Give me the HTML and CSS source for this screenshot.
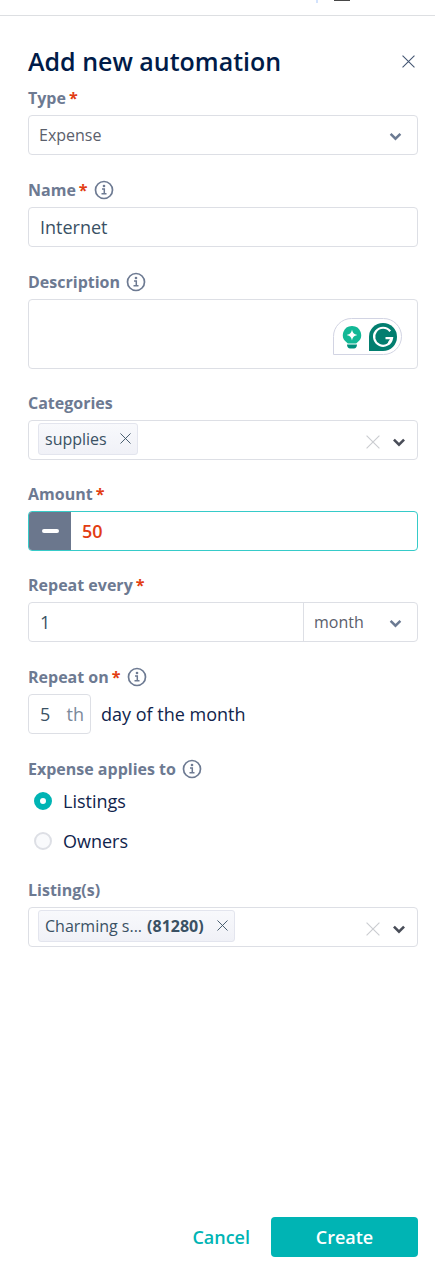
FILE: index.html
```
<!DOCTYPE html>
<html lang="en">
<head>
    <meta charset="UTF-8">
    <meta name="viewport" content="width=device-width, initial-scale=1.0">
    <title>Add new automation</title>
    <link rel="stylesheet" href="styles.css">
</head>
<body>
    <svg class="symbols" aria-hidden="true">
        <symbol id="info" viewBox="0 0 20 20">
            <circle cx="10" cy="10" r="8.5" fill="none" stroke="currentColor" stroke-width="1.7"/>
            <circle cx="10" cy="6" r="1.3" fill="currentColor"/>
            <path d="M8 9h2.3v4.6M7.5 13.8h5" fill="none" stroke="currentColor" stroke-width="1.5"/>
        </symbol>
        <symbol id="cross" viewBox="0 0 12 12">
            <path d="M.5.5l11 11M11.5.5l-11 11" fill="none" stroke="currentColor"/>
        </symbol>
        <symbol id="chevron" viewBox="0 0 12 8">
            <path d="M1.5 1.5L6 6l4.5-4.5" fill="none" stroke="currentColor" stroke-width="2.3"/>
        </symbol>
    </svg>

    <div class="topbar">
        <span class="topbar-divider"></span>
        <span class="topbar-menu"></span>
    </div>

    <form class="panel">
        <header class="panel-header">
            <h1>Add new automation</h1>
            <button type="button" class="close" aria-label="Close"><svg><use href="#cross"/></svg></button>
        </header>

        <div class="field">
            <div class="label"><label for="type">Type</label><span class="required">*</span></div>
            <div class="box">
                <select id="type"><option>Expense</option></select>
                <svg class="chevron"><use href="#chevron"/></svg>
            </div>
        </div>

        <div class="field">
            <div class="label"><label for="name">Name</label><span class="required">*</span><svg class="info"><use href="#info"/></svg></div>
            <div class="box"><input type="text" id="name" value="Internet"></div>
        </div>

        <div class="field">
            <div class="label"><label for="description">Description</label><svg class="info"><use href="#info"/></svg></div>
            <div class="box box-area">
                <textarea id="description"></textarea>
                <div class="assistant">
                    <svg class="bulb" viewBox="0 0 20 24">
                        <path d="M10 1a9 9 0 0 0-5.5 16.2c.8.6 1 .8 1.3 1.3h8.4c.3-.5.5-.7 1.3-1.3A9 9 0 0 0 10 1z" fill="#12b896"/>
                        <path d="M10 4.5c.8 3.600 1.800 4.500 5.200 5.500-3.400 1-4.400 1.900-5.200 5.500-.8-3.600-1.800-4.500-5.200-5.500 3.400-1 4.400-1.900 5.200-5.500z" fill="#fff"/>
                        <path d="M5 19.5h10c0 2.500-1.500 4-3 4H8c-1.500 0-3-1.500-3-4z" fill="#00907c"/>
                    </svg>
                    <svg class="grammar" viewBox="0 0 28 28">
                        <path d="M14 0a14 14 0 1 1 0 28H0V14A14 14 0 0 1 14 0z" fill="#027e6f"/>
                        <path d="M21.2 8.200A9 9 0 1 0 23 15.200h-6.500M19.800 19.800l3.200-4.600" fill="none" stroke="#fff" stroke-width="2.2"/>
                    </svg>
                </div>
            </div>
        </div>

        <div class="field">
            <div class="label"><label for="categories">Categories</label></div>
            <div class="box">
                <span class="tag">supplies <button type="button" aria-label="Remove supplies"><svg><use href="#cross"/></svg></button></span>
                <input type="text" id="categories">
                <button type="button" class="clear" aria-label="Clear categories"><svg><use href="#cross"/></svg></button>
                <button type="button" class="toggle" aria-label="Open categories"><svg><use href="#chevron"/></svg></button>
            </div>
        </div>

        <div class="field">
            <div class="label"><label for="amount">Amount</label><span class="required">*</span></div>
            <div class="box box-active">
                <button type="button" class="sign" aria-label="Negative amount"><span></span></button>
                <input type="text" id="amount" class="amount" value="50">
            </div>
        </div>

        <div class="field">
            <div class="label"><label for="every">Repeat every</label><span class="required">*</span></div>
            <div class="box">
                <input type="text" id="every" value="1">
                <div class="unit">
                    <select aria-label="Repeat unit"><option>month</option></select>
                    <svg class="chevron"><use href="#chevron"/></svg>
                </div>
            </div>
        </div>

        <div class="field">
            <div class="label"><label for="day">Repeat on</label><span class="required">*</span><svg class="info"><use href="#info"/></svg></div>
            <div class="day-row">
                <div class="box box-day">
                    <input type="text" id="day" value="5">
                    <span>th</span>
                </div>
                <span>day of the month</span>
            </div>
        </div>

        <fieldset class="field">
            <legend class="label">Expense applies to<svg class="info"><use href="#info"/></svg></legend>
            <div class="radios">
                <label><input type="radio" name="applies" checked>Listings</label>
                <label><input type="radio" name="applies">Owners</label>
            </div>
        </fieldset>

        <div class="field">
            <div class="label"><label for="listings">Listing(s)</label></div>
            <div class="box">
                <span class="tag">Charming s... <b>(81280)</b> <button type="button" aria-label="Remove listing"><svg><use href="#cross"/></svg></button></span>
                <input type="text" id="listings">
                <button type="button" class="clear" aria-label="Clear listings"><svg><use href="#cross"/></svg></button>
                <button type="button" class="toggle" aria-label="Open listings"><svg><use href="#chevron"/></svg></button>
            </div>
        </div>

        <footer class="actions">
            <button type="button" class="cancel">Cancel</button>
            <button type="submit" class="create">Create</button>
        </footer>
    </form>
</body>
</html>
```
FILE: styles.css
```
* {
    box-sizing: border-box;
}

body {
    display: flex;
    flex-direction: column;
    min-height: 100vh;
    margin: 0;
    font-family: "Open Sans", sans-serif;
    font-size: 16px;
    line-height: 24px;
    color: #10244c;
    background-color: #fff;
}

button,
input,
select,
textarea {
    margin: 0;
    padding: 0;
    border: none;
    outline: none;
    background: none;
    font: inherit;
    color: inherit;
}

button {
    cursor: pointer;
}

svg {
    display: block;
    flex: none;
}

.symbols {
    position: absolute;
    width: 0;
    height: 0;
}

.topbar {
    display: flex;
    justify-content: flex-end;
    gap: 16px;
    height: 16px;
    padding-right: 85px;
    border-bottom: 1px solid #dddfe2;
}

.topbar-divider {
    width: 2px;
    height: 3px;
    background-color: #d3e3fd;
}

.topbar-menu {
    width: 16px;
    height: 1px;
    background-color: #474747;
}

.panel {
    display: flex;
    flex-direction: column;
    flex: 1;
    padding: 27px 17px 19px 28px;
}

.panel-header {
    display: flex;
    justify-content: space-between;
    align-items: center;
    height: 36px;
    margin-bottom: 8px;
}

.panel-header h1 {
    margin: 0;
    font-size: 25px;
    font-weight: 600;
    line-height: 36px;
    color: #001b48;
}

.close {
    padding: 3px;
    color: #435572;
}

.close svg {
    width: 13px;
    height: 13px;
}

.field {
    min-width: 0;
    margin: 0 0 23px;
    padding: 0;
    border: none;
}

.label {
    display: flex;
    align-items: center;
    padding: 0;
    margin-bottom: 5px;
    font-weight: 700;
    line-height: 23px;
    color: #6d7a92;
}

.required {
    margin-left: 3px;
    color: #e23c12;
}

.info {
    width: 20px;
    height: 24px;
    margin-left: 6px;
}

.box {
    display: flex;
    align-items: center;
    position: relative;
    height: 40px;
    border: 1px solid #dddfe5;
    border-radius: 4px;
    font-size: 18px;
    color: #3a5164;
}

.box input {
    flex: 1;
    min-width: 0;
    height: 100%;
    padding-left: 11px;
}

.box select {
    width: 100%;
    height: 100%;
    padding: 0 40px 0 10px;
    appearance: none;
    font-size: 16px;
    color: #5b606c;
}

.chevron {
    position: absolute;
    right: 15px;
    top: 16px;
    width: 13px;
    height: 9px;
    color: #6b7a92;
    pointer-events: none;
}

.box-area {
    height: 70px;
}

.box-area textarea {
    width: 100%;
    height: 100%;
    padding: 8px 12px;
    resize: none;
}

.assistant {
    display: flex;
    align-items: center;
    justify-content: space-between;
    position: absolute;
    right: 15px;
    bottom: 13px;
    width: 69px;
    height: 37px;
    padding: 0 4px 0 8px;
    border: 1px solid #d2d4e3;
    border-radius: 19px 19px 19px 0;
}

.bulb {
    width: 20px;
    height: 24px;
}

.grammar {
    width: 28px;
    height: 28px;
}

.tag {
    display: flex;
    align-items: center;
    gap: 5px;
    height: 32px;
    margin: 0 0 3px 9px;
    padding: 0 6px;
    border: 1px solid #e3e5ee;
    border-radius: 3px;
    background: linear-gradient(#f8f9fc, #f0f1f7);
    font-size: 16px;
}

.tag button {
    margin-left: 8px;
}

.tag svg {
    width: 11px;
    height: 11px;
}

.clear {
    margin-right: 12px;
    padding-top: 4px;
    color: #cbcdd1;
}

.clear svg {
    width: 14px;
    height: 14px;
}

.toggle {
    margin-right: 11px;
    padding-top: 4px;
    color: #494d58;
}

.toggle svg {
    width: 14px;
    height: 9px;
}

.box-active {
    border-color: #36cbc9;
}

.sign {
    display: flex;
    align-items: center;
    justify-content: center;
    width: 42px;
    height: 100%;
    border-radius: 3px 0 0 3px;
    background-color: #6b778d;
}

.sign span {
    width: 17px;
    height: 4px;
    border-radius: 2px;
    background-color: #fff;
}

.box .amount {
    font-weight: 600;
    color: #e23c12;
}

.unit {
    position: relative;
    width: 114px;
    height: 100%;
    border-left: 1px solid #dddfe5;
}

.day-row {
    display: flex;
    align-items: center;
    gap: 10px;
    font-size: 18px;
}

.box-day {
    width: 63px;
    padding-right: 6px;
}

.box-day span {
    color: #7b899b;
}

.radios {
    display: flex;
    flex-direction: column;
    gap: 10px;
}

.radios label {
    display: flex;
    align-items: center;
    gap: 11px;
    height: 30px;
    padding-left: 6px;
    font-size: 18px;
}

.radios input {
    width: 18px;
    height: 18px;
    border: 2px solid #dddfe5;
    border-radius: 50%;
    background-color: #f9fafc;
    appearance: none;
}

.radios input:checked {
    border: 6px solid #00b4b4;
    background-color: #fff;
}

.actions {
    display: flex;
    justify-content: flex-end;
    gap: 21px;
    margin-top: auto;
    font-size: 18px;
    font-weight: 600;
}

.cancel {
    color: #00b4b4;
}

.create {
    width: 147px;
    height: 40px;
    border-radius: 4px;
    background-color: #00b4b4;
    color: #fff;
}
```
